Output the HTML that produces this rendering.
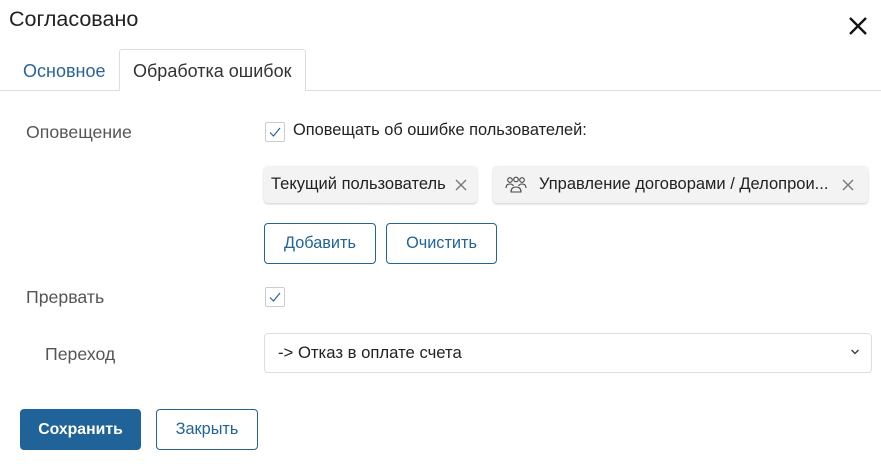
<!DOCTYPE html>
<html><head><meta charset="utf-8"><style>
*{box-sizing:border-box;margin:0;padding:0}
body{width:881px;height:464px;background:#fff;font-family:"Liberation Sans",sans-serif;color:#222;position:relative;overflow:hidden}
.a{position:absolute;white-space:nowrap}
.lbl{font-size:17.7px;color:#555}
.cb{position:absolute;width:20px;height:20px;border:1px solid #ccc;border-radius:2px;background:#fff}
.chip{position:absolute;background:#f3f3f3;border-radius:4px;box-shadow:0 1px 2px rgba(0,0,0,.2);font-size:16.5px;color:#222;display:flex;align-items:center}
.btn{position:absolute;border:1px solid #1f6398;border-radius:4px;color:#1f6398;font-size:16.3px;display:flex;align-items:center;justify-content:center;background:#fff}
</style></head><body>
<div class="a" style="left:9px;top:7px;font-size:21.5px;color:#222">Согласовано</div>
<svg class="a" style="left:848px;top:16px" width="20" height="20" viewBox="0 0 20 20"><path d="M2 2L18 18M18 2L2 18" stroke="#111" stroke-width="2.3"/></svg>
<div class="a" style="left:0;top:90px;width:881px;height:1px;background:#ddd"></div>
<div class="a" style="left:119px;top:49px;width:187px;height:42px;border:1px solid #ddd;border-bottom:none;background:#fff;border-radius:3px 3px 0 0"></div>
<div class="a" style="left:23px;top:61px;font-size:18px;color:#2a6496">Основное</div>
<div class="a" style="left:133px;top:61px;font-size:18px;color:#333">Обработка ошибок</div>

<div class="a lbl" style="left:26px;top:122px">Оповещение</div>
<div class="cb" style="left:265px;top:122px"></div>
<svg class="a" style="left:268px;top:126px" width="14" height="12" viewBox="0 0 14 12"><path d="M2 6.5L5.5 10L12 2" stroke="#2a6496" stroke-width="1.2" fill="none"/></svg>
<div class="a" style="left:293px;top:121px;font-size:16.4px;color:#222">Оповещать об ошибке пользователей:</div>

<div class="chip" style="left:264px;top:166px;width:213px;height:37px;padding-left:7px">Текущий пользователь
<svg style="margin-left:9px" width="12" height="12" viewBox="0 0 12 12"><path d="M1 1L11 11M11 1L1 11" stroke="#777" stroke-width="1.4"/></svg></div>
<div class="chip" style="left:493px;top:166px;width:375px;height:37px;padding-left:12px">
<svg width="22" height="18" viewBox="0 0 22 18" fill="none" stroke="#444" stroke-width="1.1"><circle cx="5" cy="4" r="2.3"/><circle cx="11" cy="3.5" r="2.3"/><circle cx="17" cy="4" r="2.3"/><path d="M1 12c0-3 2-4 4-4s3 1 3.5 2M21 12c0-3-2-4-4-4s-3 1-3.5 2M6 16c0-3.5 2-5 5-5s5 1.5 5 5z"/></svg>
<span style="margin-left:12px">Управление договорами / Делопрои...</span>
<svg style="margin-left:14px" width="12" height="12" viewBox="0 0 12 12"><path d="M1 1L11 11M11 1L1 11" stroke="#777" stroke-width="1.4"/></svg></div>

<div class="btn" style="left:264px;top:223px;width:112px;height:41px">Добавить</div>
<div class="btn" style="left:386px;top:223px;width:111px;height:41px">Очистить</div>

<div class="a lbl" style="left:26px;top:287px">Прервать</div>
<div class="cb" style="left:265px;top:287px"></div>
<svg class="a" style="left:268px;top:291px" width="14" height="12" viewBox="0 0 14 12"><path d="M2 6.5L5.5 10L12 2" stroke="#2a6496" stroke-width="1.2" fill="none"/></svg>

<div class="a lbl" style="left:45px;top:344px">Переход</div>
<div class="a" style="left:264px;top:333px;width:608px;height:40px;border:1px solid #ddd;border-radius:4px"></div>
<div class="a" style="left:278px;top:343px;font-size:16.7px;color:#222">-&gt; Отказ в оплате счета</div>
<svg class="a" style="left:850px;top:348px" width="10" height="8" viewBox="0 0 10 8"><path d="M1.5 2L5 5.5L8.5 2" stroke="#333" stroke-width="1.3" fill="none"/></svg>

<div class="btn" style="left:20px;top:409px;width:121px;height:41px;background:#1f6398;color:#fff;font-weight:bold;font-size:15.8px">Сохранить</div>
<div class="btn" style="left:156px;top:409px;width:102px;height:41px">Закрыть</div>
</body></html>
